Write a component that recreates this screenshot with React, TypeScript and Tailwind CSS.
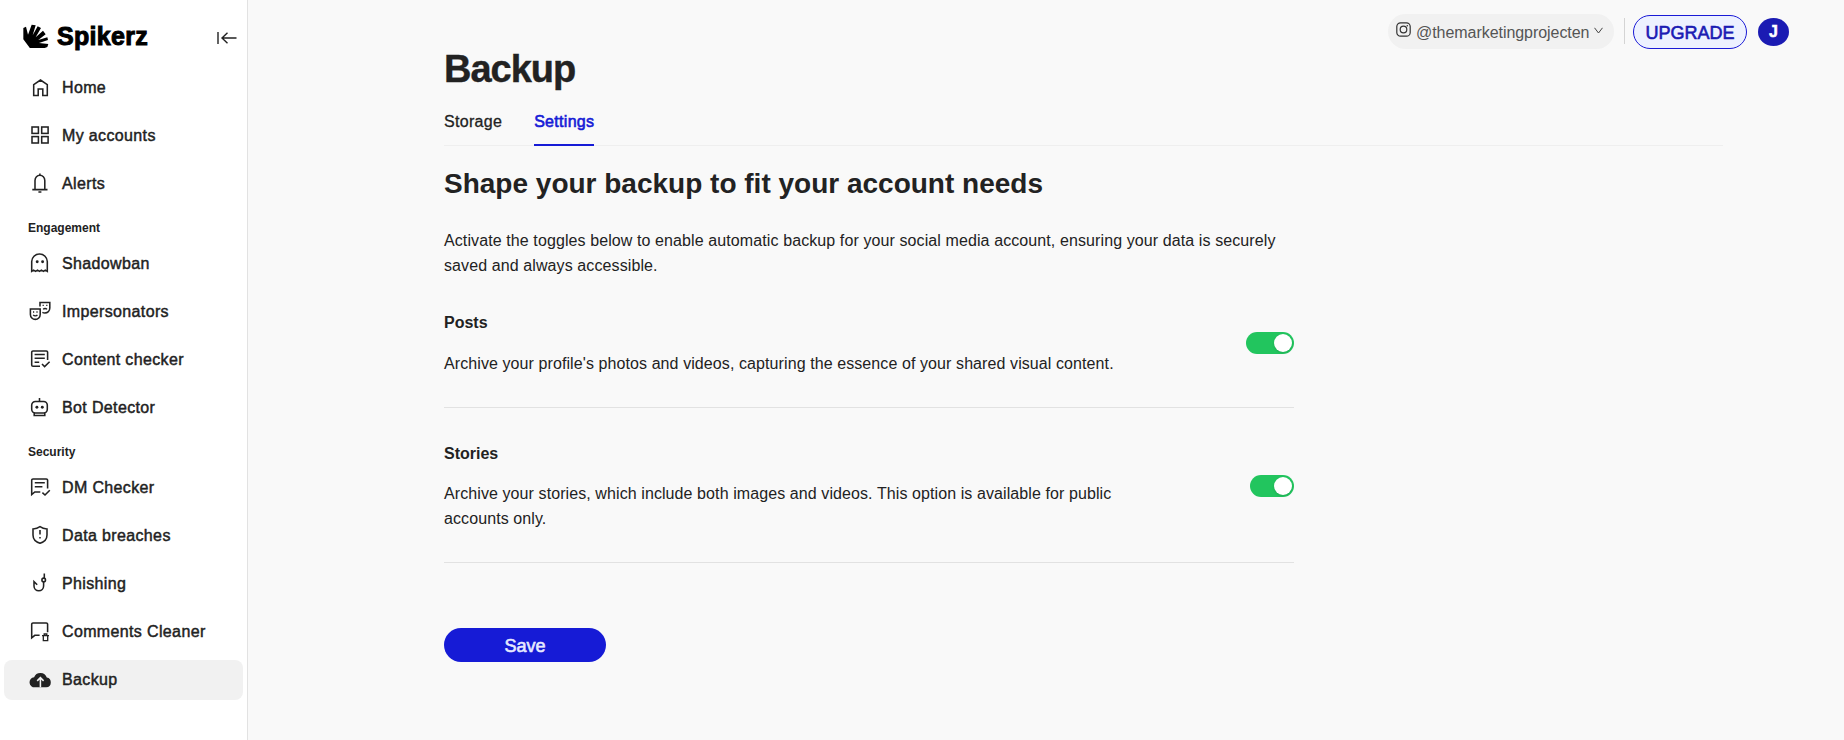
import { useState } from "react";
import type { ReactNode } from "react";

interface NavItem {
  label: string;
  icon: ReactNode;
  active?: boolean;
}

interface NavSection {
  title?: string;
  items: NavItem[];
}

function Icon({ children }: { children: ReactNode }) {
  return (
    <svg
      width="24"
      height="24"
      viewBox="0 0 24 24"
      fill="none"
      stroke="currentColor"
      strokeWidth="1.55"
      className="shrink-0"
    >
      {children}
    </svg>
  );
}

const sections: NavSection[] = [
  {
    items: [
      {
        label: "Home",
        icon: (
          <Icon>
            <path d="M5.7 19.4V8.6L12.5 4l6.8 4.6v10.8h-4.5V13h-4.6v6.4z" />
          </Icon>
        ),
      },
      {
        label: "My accounts",
        icon: (
          <Icon>
            <rect x="4" y="3" width="6.4" height="6.4" />
            <rect x="13.7" y="3" width="6.4" height="6.4" />
            <rect x="4" y="12.6" width="6.4" height="6.4" />
            <rect x="13.7" y="12.6" width="6.4" height="6.4" />
          </Icon>
        ),
      },
      {
        label: "Alerts",
        icon: (
          <Icon>
            <path d="M4.3 17.6h15.2M7 17.6V8.4a4.9 5.2 0 0 1 9.8 0v9.2M11.9 1.4v2M10.4 20h3" />
          </Icon>
        ),
      },
    ],
  },
  {
    title: "Engagement",
    items: [
      {
        label: "Shadowban",
        icon: (
          <Icon>
            <path d="M3.7 19.4V9.6a7.8 7.6 0 0 1 15.6 0v9.8l-2-1.2-1.9 1.2-2-1.2-1.9 1.2-2-1.2-1.9 1.2-2-1.2z" />
            <circle cx="9.2" cy="9.8" r="1.45" fill="currentColor" stroke="none" />
            <circle cx="14.6" cy="9.8" r="1.45" fill="currentColor" stroke="none" />
          </Icon>
        ),
      },
      {
        label: "Impersonators",
        icon: (
          <Icon>
            <path d="M2.4 9h9.8v5.4a4.9 5 0 0 1-9.8 0z" />
            <path d="M12 6.5V2.4h9.8V8c0 3-2.3 4.9-4.9 4.9-.9 0-1.8-.2-2.5-.6" />
            <path
              d="M5 12h1.2M8.4 12h1.2M5.2 14.8c1 1.4 3.3 1.4 4.2 0M14.6 5.4h1.2M18.2 5.4h1.2M15.2 9.4c.8-1.2 2.9-1.2 3.8 0"
              strokeWidth="1.3"
            />
          </Icon>
        ),
      },
      {
        label: "Content checker",
        icon: (
          <Icon>
            <path d="M12 18.2H5a1.3 1.3 0 0 1-1.3-1.3V4.2A1.3 1.3 0 0 1 5 2.9h13.3a1.3 1.3 0 0 1 1.3 1.3V12M6.6 6.4h10.2M6.6 10.2h10.2M6.6 14.2h4.6M14 16l2.6 2.6 5-4.8" />
          </Icon>
        ),
      },
      {
        label: "Bot Detector",
        icon: (
          <Icon>
            <path d="M11.5 2v3.2M7.4 5.4h8.2a3.7 3.7 0 0 1 3.7 3.7v4.2a3.7 3.7 0 0 1-3.7 3.7H7.4a3.7 3.7 0 0 1-3.7-3.7V9.1a3.7 3.7 0 0 1 3.7-3.7zM6.2 17.2v2.2h10.6v-2.2" />
            <circle cx="8.9" cy="11.2" r="1.45" fill="currentColor" stroke="none" />
            <circle cx="14.3" cy="11.2" r="1.45" fill="currentColor" stroke="none" />
          </Icon>
        ),
      },
    ],
  },
  {
    title: "Security",
    items: [
      {
        label: "DM Checker",
        icon: (
          <Icon>
            <path d="M12.3 16H6.8l-3.1 2.6V4.2A1.3 1.3 0 0 1 5 2.9h13.3a1.3 1.3 0 0 1 1.3 1.3v8.4M6.8 6.7h10M6.8 10.7h7.6M14.4 16.6l2.6 2.4 4.8-4.8" />
          </Icon>
        ),
      },
      {
        label: "Data breaches",
        icon: (
          <Icon>
            <path d="M12 2.7c2 1.5 4.4 2.2 7 2.2v6c0 4-2.4 6.8-7 8.3-4.6-1.5-7-4.3-7-8.3v-6c2.6 0 5-.7 7-2.2zM12 6v4.5M12 12.9v1.6" />
          </Icon>
        ),
      },
      {
        label: "Phishing",
        icon: (
          <Icon>
            <path d="M16.3 1.6v4.4M15.6 9.8v4.2a4.8 4.8 0 0 1-9.6 0V9.6l3.2 3.2" />
            <circle cx="15.7" cy="7.9" r="1.8" />
          </Icon>
        ),
      },
      {
        label: "Comments Cleaner",
        icon: (
          <Icon>
            <path d="M11.6 15.3H6.8l-3.1 2.6V4.2A1.3 1.3 0 0 1 5 2.9h13.3a1.3 1.3 0 0 1 1.3 1.3v8" />
            <path d="M14 15.6h7M15.3 15.6v5.1h4.4v-5.1M16.2 15.2v-1.2h2.6v1.2" strokeWidth="1.3" />
          </Icon>
        ),
      },
      {
        label: "Backup",
        active: true,
        icon: (
          <Icon>
            <path
              d="M7 19.3a5 5 0 0 1-.9-10A6.7 6.7 0 0 1 18.8 9.6 4.9 4.9 0 0 1 18.3 19.3z"
              fill="currentColor"
              stroke="none"
            />
            <path d="M12.4 19.3V10M9.2 12.9l3.2-3.3 3.2 3.3" stroke="#f1f1f1" />
          </Icon>
        ),
      },
    ],
  },
];

function Logo() {
  return (
    <div className="flex items-center gap-2">
      <svg width="26" height="24" viewBox="0 0 78 72" fill="#000">
        <path d="M1 12L9 8l6 24L26 2l12 2-9 30L44 7l10 5-16 28 22-20 8 11-22 17 27-8 2 8-27 9 28 3-3 9-13 5H22L1 46z" />
      </svg>
      <span className="text-[25px] leading-[28px] font-bold tracking-[0.3px] text-black [-webkit-text-stroke:1px_#000]">
        Spikerz
      </span>
    </div>
  );
}

function Sidebar() {
  return (
    <aside className="flex w-[248px] shrink-0 flex-col border-r border-[#e2e2e2] bg-white">
      <div className="flex h-16 items-center justify-between pt-2 pr-2.5 pl-[23px]">
        <Logo />
        <svg width="20" height="14" viewBox="0 0 20 14" fill="none" stroke="#222" strokeWidth="1.4" className="mt-1">
          <path d="M1 1v12M19.5 7H5M10.5 1.8 5 7l5.5 5.2" />
        </svg>
      </div>
      {sections.map((section, i) => (
        <nav key={i} className="flex flex-col">
          {section.title && (
            <h2 className="mt-3 mb-1 pl-7 text-xs leading-4 font-bold">{section.title}</h2>
          )}
          {section.items.map((item) => (
            <a
              key={item.label}
              className={
                item.active
                  ? "mx-1 my-1 flex h-10 items-center gap-2.5 rounded-lg bg-[#f1f1f1] pl-6"
                  : "mx-1 my-1 flex h-10 items-center gap-2.5 rounded-lg pl-6"
              }
            >
              {item.icon}
              <span className="text-base tracking-[0.36px] [-webkit-text-stroke:0.45px_#222]">{item.label}</span>
            </a>
          ))}
        </nav>
      ))}
    </aside>
  );
}

function TopBar() {
  return (
    <header className="flex h-[49px] shrink-0 items-end justify-end pr-[55px]">
      <button className="flex h-[35px] w-[226px] items-center rounded-full bg-[#f1f1f1] pl-2 text-[#555]">
        <svg width="15" height="15" viewBox="0 0 15 15" fill="none" stroke="#333" strokeWidth="1.2" className="-mt-1">
          <rect x="0.8" y="0.8" width="13.4" height="13.4" rx="3.8" />
          <circle cx="7.5" cy="7.5" r="3.3" />
          <circle cx="11.3" cy="3.7" r="0.8" fill="#333" stroke="none" />
        </svg>
        <span className="ml-[5px] pt-0.5 text-base tracking-[-0.05px]">@themarketingprojecten</span>
        <svg width="9" height="7" viewBox="0 0 9 7" fill="none" stroke="#444" className="-mt-0.5 ml-[5px]">
          <path d="M.5.8 4.5 6l4-5.2" />
        </svg>
      </button>
      <div className="mb-[5px] ml-2.5 h-[26px] w-px bg-[#d4d4d4]" />
      <button className="ml-2 flex h-[34px] w-[114px] items-center justify-center rounded-full border border-[#1a1ad6] bg-[#edf1ff] pt-0.5 text-lg text-[#1b1bb3] [-webkit-text-stroke:0.6px_#1b1bb3]">
        UPGRADE
      </button>
      <div className="mb-[3px] ml-[11px] flex h-[28px] w-[31px] items-center justify-center rounded-[50%] bg-[#1b1bb3] text-base font-bold text-white [-webkit-text-stroke:0.5px_#fff]">
        J
      </div>
    </header>
  );
}

function Toggle({ wide }: { wide?: boolean }) {
  const [on, setOn] = useState(true);
  return (
    <button
      role="switch"
      aria-checked={on}
      onClick={() => setOn(!on)}
      className={`mb-0.5 flex h-[22px] items-center rounded-full px-0.5 ${wide ? "w-12" : "w-11"} ${
        on ? "justify-end bg-[#22c55e]" : "justify-start bg-gray-300"
      }`}
    >
      <span className="size-[18px] rounded-full bg-white shadow-sm" />
    </button>
  );
}

export default function App() {
  return (
    <div className="flex h-[740px] w-[1844px] overflow-hidden bg-[#f9f9f9] font-['Liberation_Sans',sans-serif] text-[#222]">
      <Sidebar />
      <div className="flex flex-1 flex-col">
        <TopBar />
        <main className="ml-[196px] w-[1279px]">
          <h1 className="text-[38px] leading-10 font-bold tracking-[-1px] [-webkit-text-stroke:0.4px_#222]">Backup</h1>
          <div className="flex gap-8 border-b border-[#efefef] pt-[21px]">
            <a className="pb-[11px] leading-6 tracking-[0.3px] [-webkit-text-stroke:0.3px_#222]">Storage</a>
            <a className="-mb-px border-b-2 border-[#161bd6] pb-[10px] leading-6 tracking-[0.3px] text-[#161bd6] [-webkit-text-stroke:0.6px_#161bd6]">
              Settings
            </a>
          </div>

          <section className="w-[850px]">
            <h2 className="mt-5 text-[28px] leading-9 font-bold">Shape your backup to fit your account needs</h2>
            <p className="mt-[26px] leading-[25px] tracking-[0.1px] whitespace-nowrap">
              Activate the toggles below to enable automatic backup for your social media account, ensuring your data is securely
              <br />
              saved and always accessible.
            </p>

            <div className="mt-[33px] flex items-center justify-between border-b border-[#e2e2e2] pb-[31px]">
              <div>
                <h3 className="leading-6 font-bold">Posts</h3>
                <p className="mt-4 leading-[25px] tracking-[0.09px] whitespace-nowrap">
                  Archive your profile's photos and videos, capturing the essence of your shared visual content.
                </p>
              </div>
              <Toggle wide />
            </div>

            <div className="mt-[34px] flex items-center justify-between border-b border-[#e2e2e2] pb-[31px]">
              <div>
                <h3 className="leading-6 font-bold">Stories</h3>
                <p className="mt-[15px] leading-[25px] tracking-[0.09px] whitespace-nowrap">
                  Archive your stories, which include both images and videos. This option is available for public
                  <br />
                  accounts only.
                </p>
              </div>
              <Toggle />
            </div>

            <button className="mt-[65px] h-[34px] w-[162px] rounded-full bg-[#161bd6] pt-0.5 text-lg text-[#e6e9ff] [-webkit-text-stroke:0.6px_#e6e9ff]">
              Save
            </button>
          </section>
        </main>
      </div>
    </div>
  );
}
